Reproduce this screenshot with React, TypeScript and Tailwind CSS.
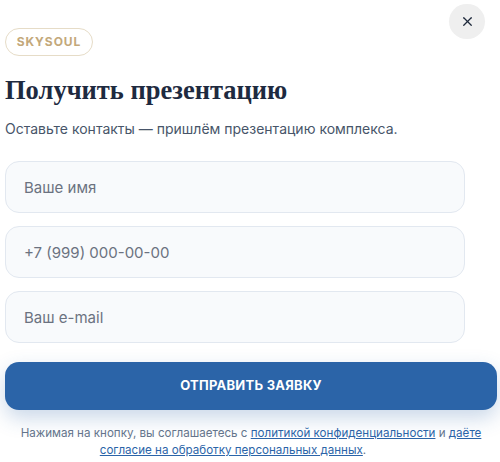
import { X } from "lucide-react";

const sans = { fontFamily: "Inter, 'Noto Sans', sans-serif" };

export default function App() {
  return (
    <div
      className="relative w-[500px] h-[462px] overflow-hidden bg-white pl-[5px] pt-[28px]"
      style={sans}
    >
      {/* Close button */}
      <button className="absolute top-[4px] left-[449px] w-[36px] h-[35px] rounded-full bg-[#efefef] flex items-center justify-center text-[#1e293b]">
        <X size={15} strokeWidth={2} />
      </button>

      {/* Badge */}
      <div className="inline-flex h-[28px] w-[88px] items-center justify-center rounded-full border border-[#e6dcc7] text-[12px] font-bold tracking-[0.08em] text-[#c3a87a]">
        SKYSOUL
      </div>

      {/* Title */}
      <h2
        className="mt-[15px] text-[26.5px] leading-[38px] font-bold text-[#1e2a40]"
        style={{ fontFamily: "'Liberation Serif', 'DejaVu Serif', serif" }}
      >
        Получить презентацию
      </h2>

      <p className="mt-[10px] text-[14px] leading-[20px] text-[#475569]">
        Оставьте контакты — пришлём презентацию комплекса.
      </p>

      {/* Fields */}
      <div className="mt-[22px] flex w-[460px] flex-col gap-[13px]">
        <input
          className="h-[52px] w-full rounded-[14px] border border-[#e2e8f0] bg-[#f8fafc] px-[18px] text-[15px] text-[#1e293b] placeholder:text-[#6b7280] outline-none"
          placeholder="Ваше имя"
        />
        <input
          className="h-[52px] w-full rounded-[14px] border border-[#e2e8f0] bg-[#f8fafc] px-[18px] text-[15px] text-[#1e293b] placeholder:text-[#6b7280] outline-none"
          placeholder="+7 (999) 000-00-00"
        />
        <input
          className="h-[52px] w-full rounded-[14px] border border-[#e2e8f0] bg-[#f8fafc] px-[18px] text-[15px] text-[#1e293b] placeholder:text-[#6b7280] outline-none"
          placeholder="Ваш e-mail"
        />
      </div>

      {/* Submit */}
      <button className="mt-[19px] h-[48px] w-[492px] rounded-[14px] bg-[#2b64a8] text-[13px] font-bold tracking-[0.02em] text-white shadow-[0_8px_20px_rgba(43,100,168,0.25)]">
        ОТПРАВИТЬ ЗАЯВКУ
      </button>

      {/* Consent */}
      <div className="mt-[15px] w-[492px] text-[11.6px] leading-[17px] text-[#64748b]">
        <div className="text-center">
          Нажимая на кнопку, вы соглашаетесь с{" "}
          <a className="text-[#2b64a8] underline">политикой конфиденциальности</a> и{" "}
          <a className="text-[#2b64a8] underline">даёте</a>
        </div>
        <div className="text-center pr-[36px]">
          <a className="text-[#2b64a8] underline">согласие на обработку персональных данных</a>.
        </div>
      </div>
    </div>
  );
}
